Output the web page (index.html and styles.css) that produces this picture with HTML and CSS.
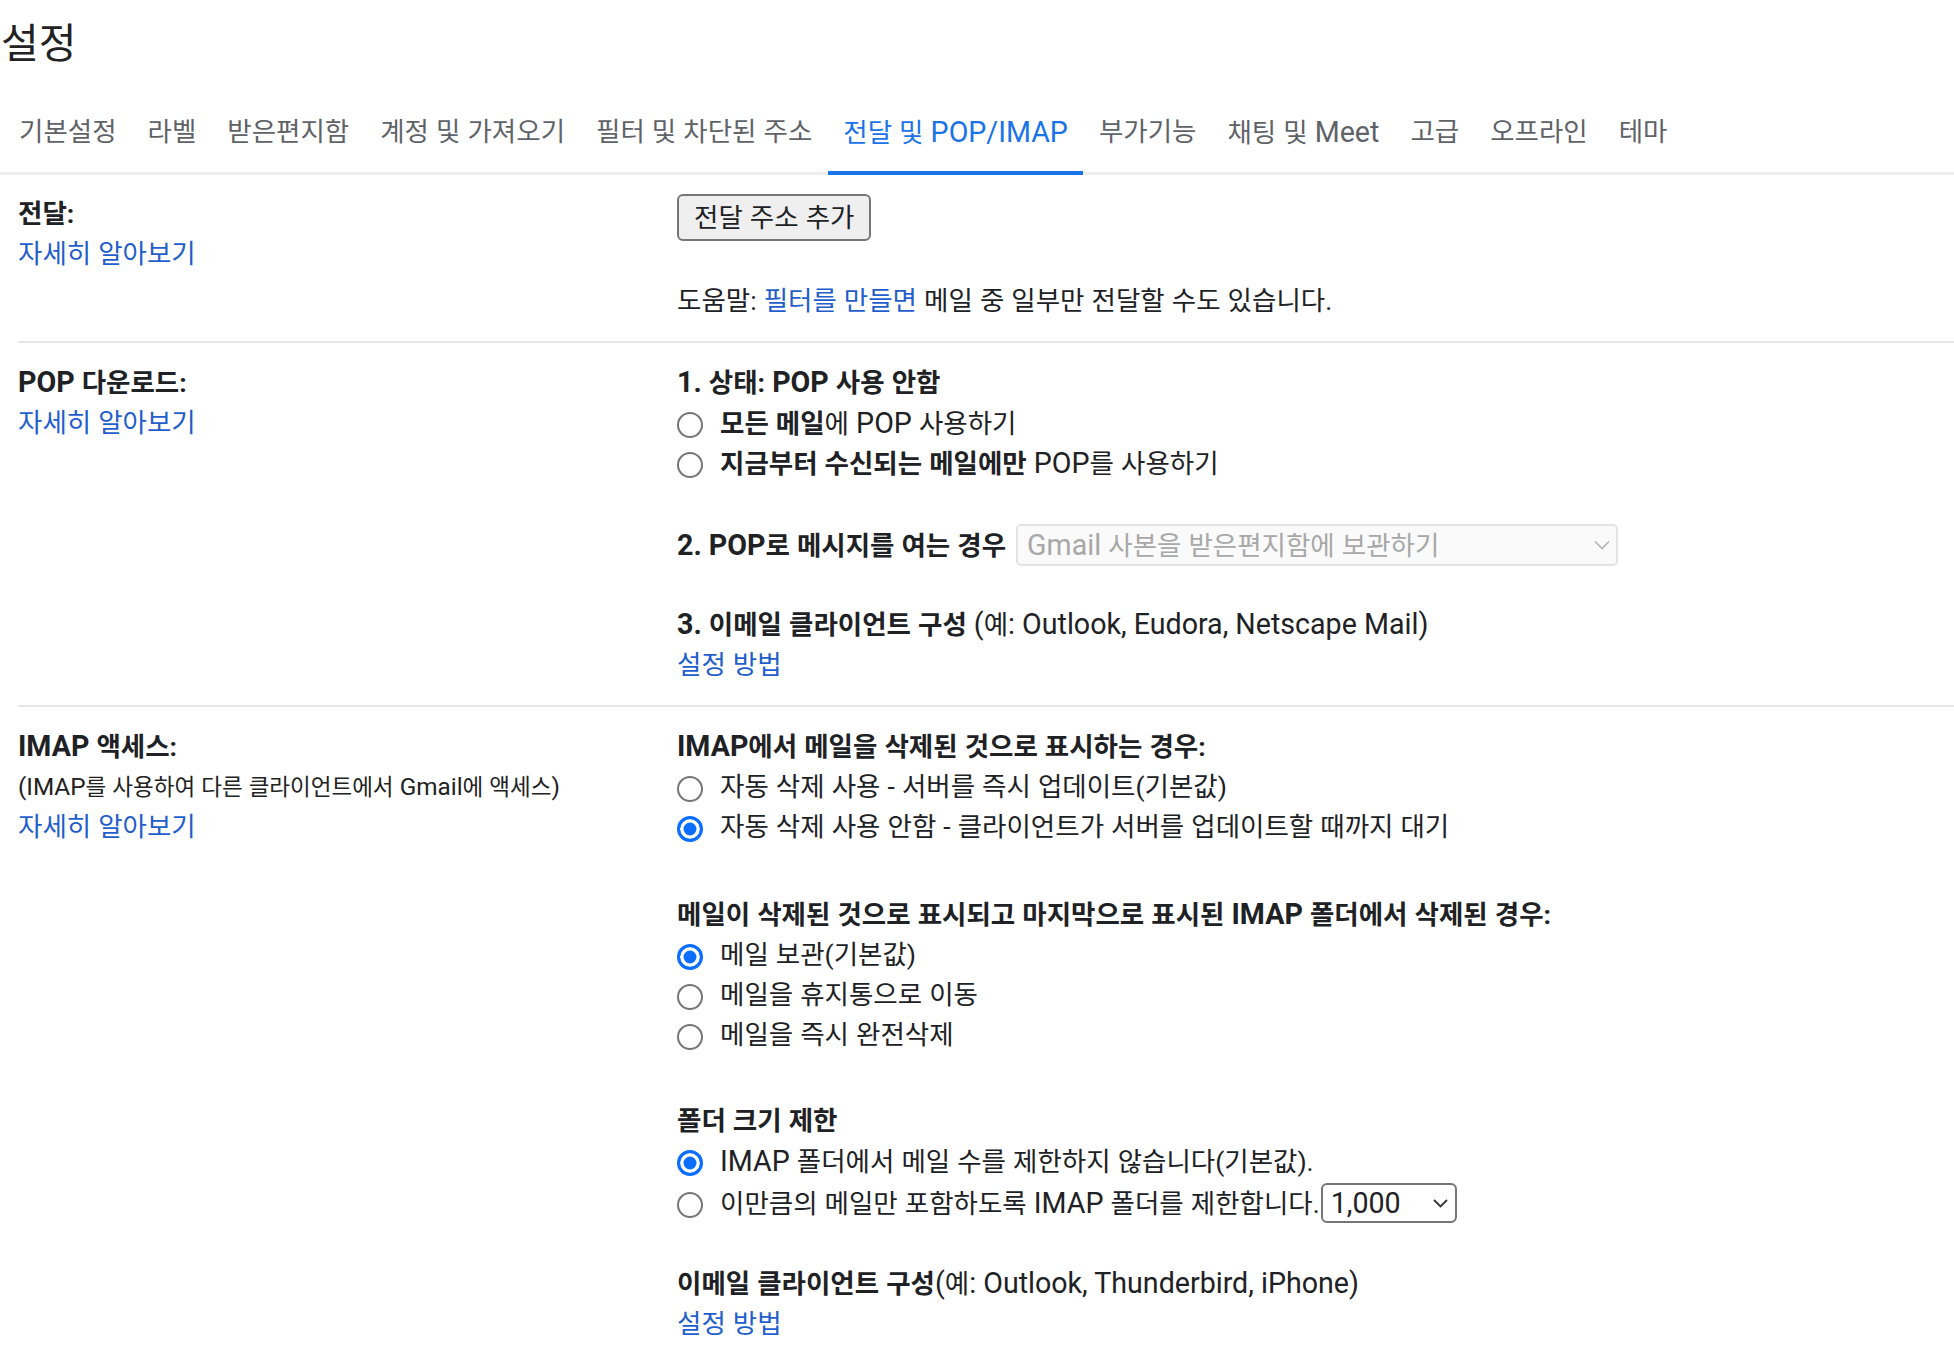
FILE: index.html
```html
<!DOCTYPE html>
<html lang="ko">
<head>
<meta charset="utf-8">
<title>설정</title>
<link rel="stylesheet" href="styles.css">
</head>
<body>
<div class="page">
  <h1 class="title">설정</h1>
  <nav class="tabs">
    <a class="tab">기본설정</a>
    <a class="tab">라벨</a>
    <a class="tab">받은편지함</a>
    <a class="tab">계정 및 가져오기</a>
    <a class="tab">필터 및 차단된 주소</a>
    <a class="tab active">전달 및 <span class="en">POP/IMAP</span></a>
    <a class="tab">부가기능</a>
    <a class="tab">채팅 및 <span class="en">Meet</span></a>
    <a class="tab">고급</a>
    <a class="tab">오프라인</a>
    <a class="tab">테마</a>
  </nav>

  <div class="rows">
    <section class="row row-forward">
      <div class="label-col">
        <div class="label">전달:</div>
        <a class="link">자세히 알아보기</a>
      </div>
      <div class="value-col">
        <button class="btn">전달 주소 추가</button>
        <div class="block">도움말: <a class="link">필터를 만들면</a> 메일 중 일부만 전달할 수도 있습니다.</div>
      </div>
    </section>

    <section class="row row-pop">
      <div class="label-col">
        <div class="label"><span class="en">POP</span> 다운로드:</div>
        <a class="link">자세히 알아보기</a>
      </div>
      <div class="value-col">
        <div class="block">
          <div class="label"><span class="en">1.</span> 상태: <span class="en">POP</span> 사용 안함</div>
          <label class="radio-line"><input class="radio" type="radio" name="pop"><span><b>모든 메일</b>에 <span class="en">POP</span> 사용하기</span></label>
          <label class="radio-line"><input class="radio" type="radio" name="pop"><span><b>지금부터 수신되는 메일에만</b> <span class="en">POP</span>를 사용하기</span></label>
        </div>
        <div class="block select-line">
          <span class="label"><span class="en">2.</span> <span class="en">POP</span>로 메시지를 여는 경우</span>
          <span class="select select-disabled">
            <span><span class="en">Gmail</span> 사본을 받은편지함에 보관하기</span>
            <svg width="16" height="10" viewBox="0 0 16 10"><path d="M1 1.5 L8 8.5 L15 1.5" fill="none" stroke="#b3b3b3" stroke-width="1.6"/></svg>
          </span>
        </div>
        <div class="block after-select">
          <div><b><span class="en">3.</span> 이메일 클라이언트 구성</b> <span class="en">(</span>예<span class="en">: Outlook, Eudora, Netscape Mail)</span></div>
          <a class="link">설정 방법</a>
        </div>
      </div>
    </section>

    <section class="row row-imap">
      <div class="label-col">
        <div class="label"><span class="en">IMAP</span> 액세스:</div>
        <div class="small"><span class="en">(IMAP</span>를 사용하여 다른 클라이언트에서 <span class="en">Gmail</span>에 액세스<span class="en">)</span></div>
        <a class="link">자세히 알아보기</a>
      </div>
      <div class="value-col">
        <div class="block">
          <div class="label"><span class="en">IMAP</span>에서 메일을 삭제된 것으로 표시하는 경우:</div>
          <label class="radio-line"><input class="radio" type="radio" name="del"><span>자동 삭제 사용 - 서버를 즉시 업데이트(기본값)</span></label>
          <label class="radio-line"><input class="radio" type="radio" name="del" checked><span>자동 삭제 사용 안함 - 클라이언트가 서버를 업데이트할 때까지 대기</span></label>
        </div>
        <div class="block spaced-a">
          <div class="label">메일이 삭제된 것으로 표시되고 마지막으로 표시된 <span class="en">IMAP</span> 폴더에서 삭제된 경우:</div>
          <label class="radio-line"><input class="radio" type="radio" name="exp" checked><span>메일 보관(기본값)</span></label>
          <label class="radio-line"><input class="radio" type="radio" name="exp"><span>메일을 휴지통으로 이동</span></label>
          <label class="radio-line"><input class="radio" type="radio" name="exp"><span>메일을 즉시 완전삭제</span></label>
        </div>
        <div class="block spaced-b">
          <div class="label">폴더 크기 제한</div>
          <label class="radio-line"><input class="radio" type="radio" name="lim" checked><span><span class="en">IMAP</span> 폴더에서 메일 수를 제한하지 않습니다(기본값).</span></label>
          <label class="radio-line select-line"><input class="radio" type="radio" name="lim"><span>이만큼의 메일만 포함하도록 <span class="en">IMAP</span> 폴더를 제한합니다.</span>
            <span class="select select-value">
              <span class="en">1,000</span>
              <svg width="15" height="9" viewBox="0 0 15 9"><path d="M1 1 L7.5 7.5 L14 1" fill="none" stroke="#333" stroke-width="1.8"/></svg>
            </span>
          </label>
        </div>
        <div class="block last-block">
          <div><b>이메일 클라이언트 구성</b><span class="en">(</span>예<span class="en">: Outlook, Thunderbird, iPhone)</span></div>
          <a class="link">설정 방법</a>
        </div>
      </div>
    </section>
  </div>
</div>
</body>
</html>
```

FILE: styles.css
```css
html, body {
  margin: 0;
  padding: 0;
  background: #ffffff;
  overflow: hidden;
}

body {
  font-family: Roboto, "Noto Sans CJK KR", sans-serif;
  font-size: 26.5px;
  line-height: 40px;
  letter-spacing: 0;
  word-spacing: 0.5px;
  color: #202124;
}

.en {
  font-size: 1.08em;
  letter-spacing: 0;
  word-spacing: 0;
}

b {
  font-weight: 700;
}

.page {
  padding-top: 16px;
}

.title {
  margin: 0;
  padding-left: 1px;
  font-size: 41px;
  line-height: 56px;
  font-weight: 400;
  letter-spacing: 0;
  color: #222222;
}

.tabs {
  display: flex;
  margin-top: 40px;
  padding-left: 3px;
  border-bottom: 3px solid #eeeeee;
}

.tab {
  padding: 0 15.5px 18px 15.5px;
  border-bottom: 4px solid transparent;
  margin-bottom: -3px;
  color: #5f6368;
  text-decoration: none;
  white-space: nowrap;
}

.tab:first-child {
  padding-left: 16px;
}

.tab.active {
  color: #1a73e8;
  border-bottom-color: #1a73e8;
}

.rows {
  margin-left: 18px;
}

.row {
  display: grid;
  grid-template-columns: 659px 1fr;
  padding: 19px 0 20px;
  border-bottom: 2px solid #e6e6e6;
}

.row:last-child {
  border-bottom: none;
  padding-bottom: 0;
}

.label-col,
.value-col {
  display: flex;
  flex-direction: column;
  align-items: flex-start;
}

.label {
  font-weight: 700;
  color: #202124;
}

.link {
  color: #1f5ecb;
  text-decoration: none;
  cursor: pointer;
}

.small {
  font-size: 22.5px;
  color: #222222;
}

.btn {
  display: block;
  box-sizing: border-box;
  height: 47px;
  padding: 0 15px;
  font: inherit;
  letter-spacing: inherit;
  word-spacing: inherit;
  color: #202124;
  background: #efefef;
  border: 2px solid #767676;
  border-radius: 6px;
}

.block {
  margin-top: 40px;
}

.value-col > .block:first-child {
  margin-top: 0;
}

.after-select {
  margin-top: 37px;
}

.spaced-a {
  margin-top: 47px;
}

.spaced-b {
  margin-top: 46px;
}

.last-block {
  margin-top: 38px;
}

.radio-line {
  display: flex;
  align-items: center;
  height: 40px;
}

.radio {
  -webkit-appearance: none;
  appearance: none;
  flex: none;
  box-sizing: border-box;
  width: 26px;
  height: 26px;
  margin: 4px 17px 0 0;
  border: 2px solid #767676;
  border-radius: 50%;
  background: #ffffff;
}

.radio:checked {
  border: 3px solid #0b6efd;
  background: #0b6efd;
  box-shadow: inset 0 0 0 3.5px #ffffff;
}

.select-line {
  display: flex;
  align-items: center;
  height: 44px;
}

.select {
  display: inline-flex;
  align-items: center;
  justify-content: space-between;
  box-sizing: border-box;
  flex: none;
}

.select-disabled {
  width: 602px;
  height: 42px;
  margin-left: 10px;
  padding: 0 6px 0 9px;
  border: 2px solid #e3e3e3;
  border-radius: 5px;
  background: #fafafa;
  color: #a8a8a8;
}

.select-value {
  width: 136px;
  height: 40px;
  margin-left: 1px;
  padding: 0 7px 0 8px;
  border: 2px solid #767676;
  border-radius: 6px;
  background: #ffffff;
  color: #202124;
}
```
